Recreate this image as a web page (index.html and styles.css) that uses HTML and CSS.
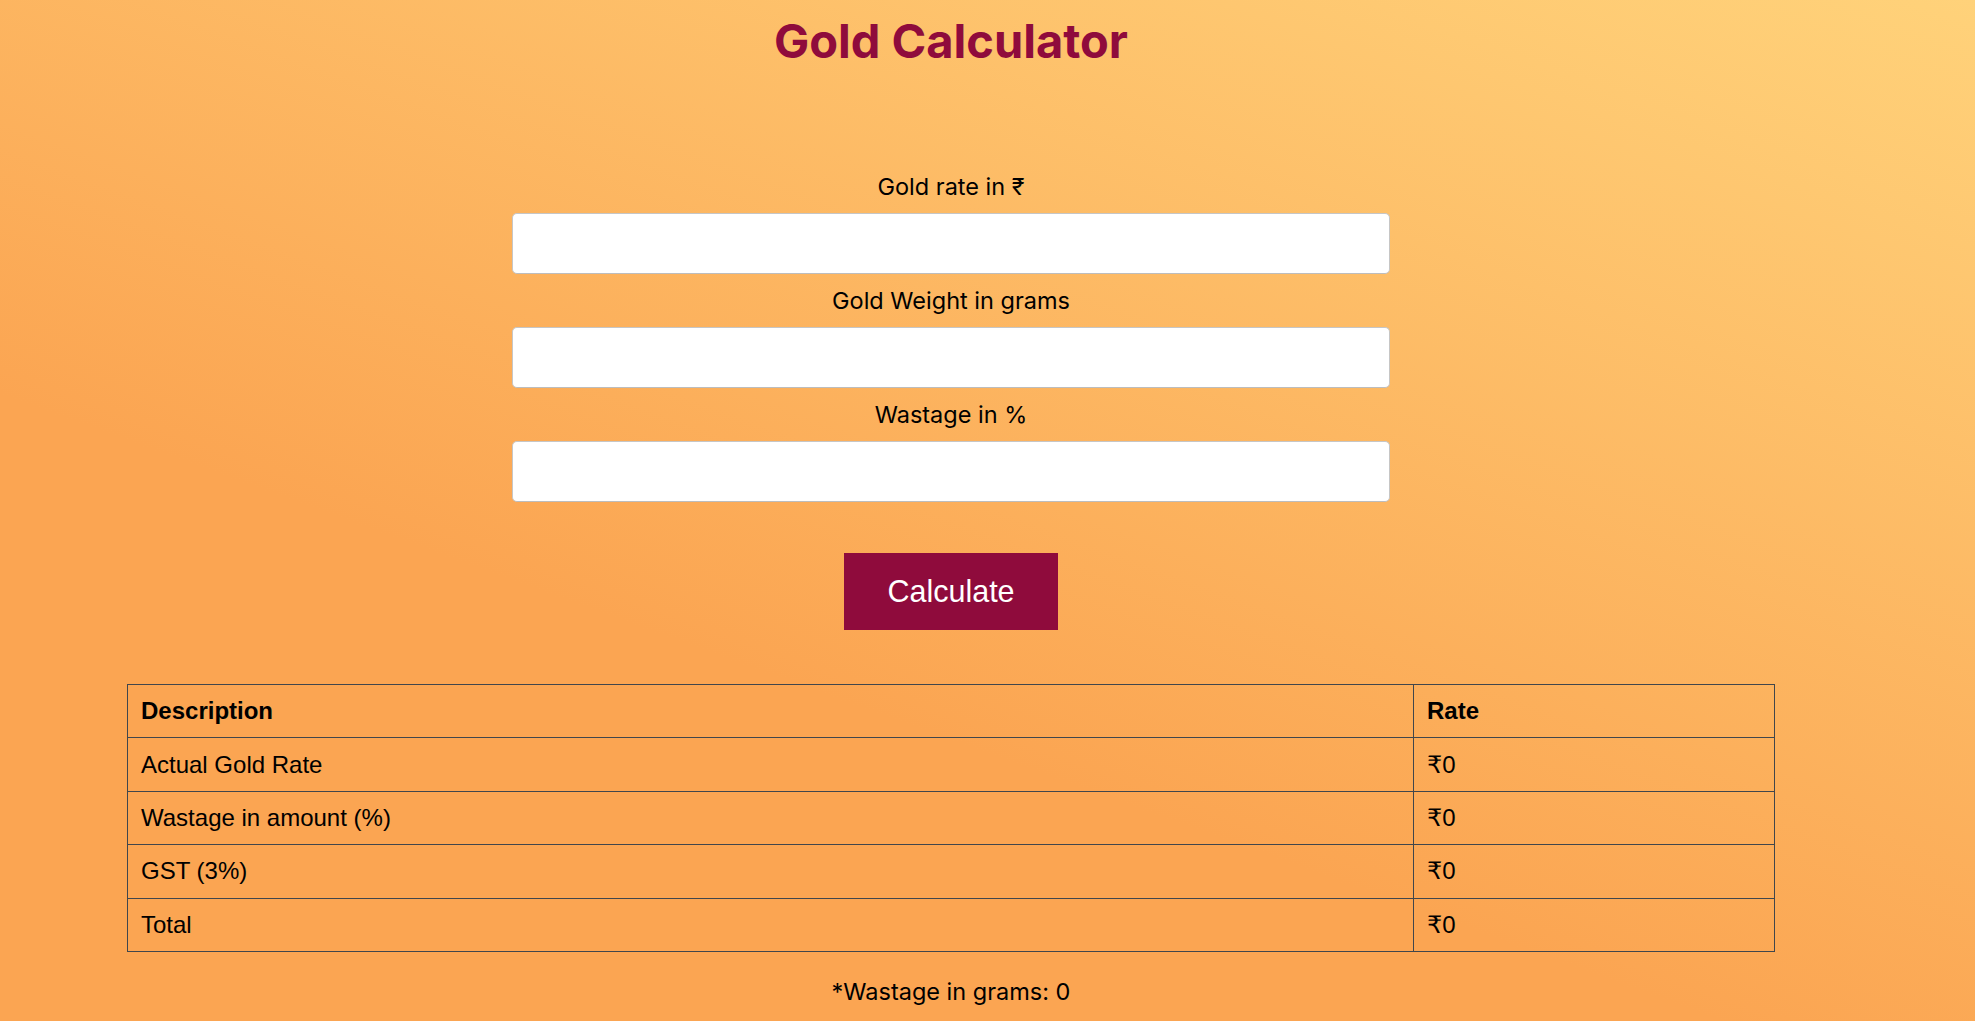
FILE: index.html
```html
<!DOCTYPE html>
<html lang="en">
<head>
<meta charset="utf-8">
<title>Gold Calculator</title>
<link rel="stylesheet" href="styles.css">
</head>
<body>
<div class="page">
  <h1 class="title">Gold Calculator</h1>
  <form class="form">
    <label class="label" for="rate">Gold rate in ₹</label>
    <input class="field" id="rate" type="text">
    <label class="label" for="weight">Gold Weight in grams</label>
    <input class="field" id="weight" type="text">
    <label class="label" for="wastage">Wastage in %</label>
    <input class="field" id="wastage" type="text">
    <button class="btn" type="button">Calculate</button>
  </form>
  <table class="results">
    <thead>
      <tr><th class="col-desc">Description</th><th class="col-rate">Rate</th></tr>
    </thead>
    <tbody>
      <tr><td>Actual Gold Rate</td><td>₹0</td></tr>
      <tr><td>Wastage in amount (%)</td><td>₹0</td></tr>
      <tr><td>GST (3%)</td><td>₹0</td></tr>
      <tr><td>Total</td><td>₹0</td></tr>
    </tbody>
  </table>
  <p class="note">*Wastage in grams: 0</p>
</div>
</body>
</html>
```
FILE: styles.css
```css
html, body {
  margin: 0;
  padding: 0;
}
body {
  min-height: 1021px;
  background: linear-gradient(20deg, #fba552 0%, #fba552 36%, #ffd27a 100%);
  color: #000;
  font-family: Inter, "Noto Sans", "DejaVu Sans", sans-serif;
}
.page {
  width: 1902px;
  display: flex;
  flex-direction: column;
  align-items: center;
}
.title {
  margin: 14px 0 0;
  font-size: 47px;
  line-height: 54px;
  font-weight: 700;
  color: #8f0b3c;
}
.form {
  margin-top: 92px;
  width: 878px;
  display: flex;
  flex-direction: column;
  align-items: stretch;
}
.label {
  display: block;
  text-align: center;
  font-size: 23.5px;
  line-height: 27px;
  margin: 13px 0;
}
.field {
  box-sizing: border-box;
  height: 61px;
  width: 100%;
  margin: 0;
  border: 1px solid #c6c6c6;
  border-bottom-color: #bdbdbd;
  border-radius: 5px;
  background: #fff;
  font-size: 20px;
  padding: 0 12px;
}
.btn {
  align-self: center;
  margin-top: 51px;
  width: 214px;
  height: 77px;
  border: none;
  background: #8f0b3c;
  color: #fff;
  font-family: "Liberation Sans", Arial, sans-serif;
  font-size: 30.5px;
  padding: 0;
}
.results {
  margin-top: 54px;
  width: 1648px;
  border-collapse: collapse;
  font-family: "Liberation Sans", Arial, "DejaVu Sans", sans-serif;
  font-size: 24px;
  text-align: left;
}
.results th,
.results td {
  border: 1px solid #40464c;
  height: 53.4px;
  padding: 0 13px;
  box-sizing: border-box;
  vertical-align: middle;
}
.results th {
  font-weight: 700;
}
.col-desc {
  width: 1286px;
}
.note {
  margin: 26px 0 0;
  font-size: 23.5px;
  line-height: 27px;
}
```
